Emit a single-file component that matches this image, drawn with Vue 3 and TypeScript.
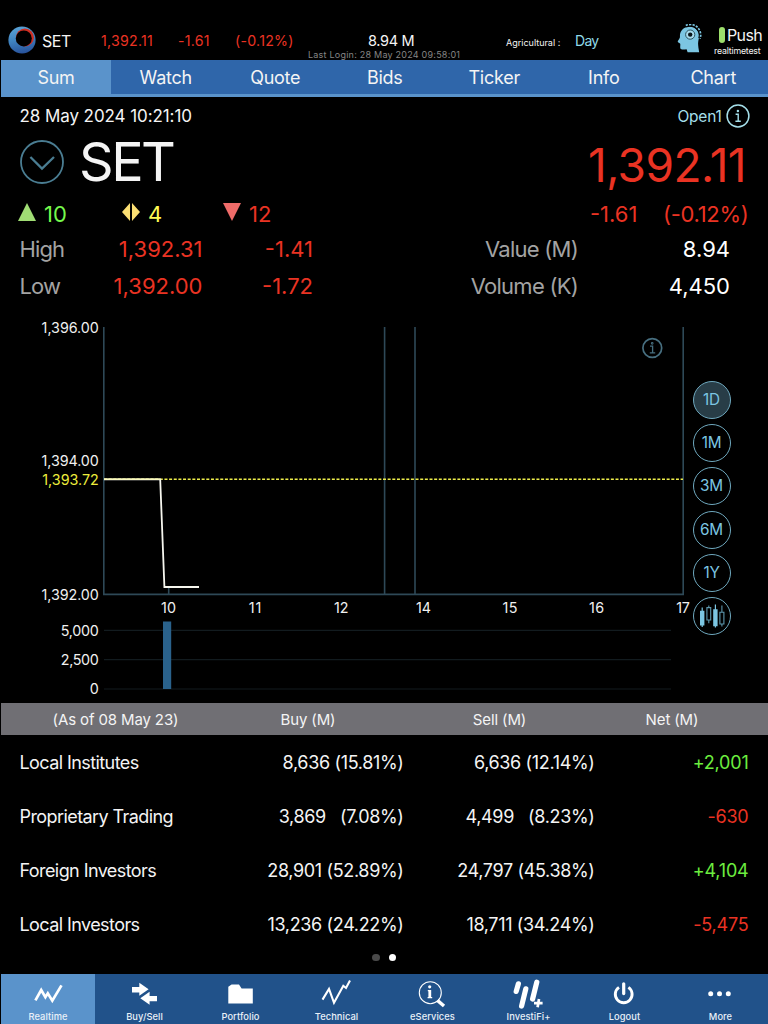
<script setup lang="ts">
interface InvestorRow {
  name: string
  buy: string
  buyPct: string
  sell: string
  sellPct: string
  net: string
}

const navTabs = ['Sum', 'Watch', 'Quote', 'Bids', 'Ticker', 'Info', 'Chart']
const ranges = ['1D', '1M', '3M', '6M', '1Y']

const rows: InvestorRow[] = [
  { name: 'Local Institutes', buy: '8,636', buyPct: '(15.81%)', sell: '6,636', sellPct: '(12.14%)', net: '+2,001' },
  { name: 'Proprietary Trading', buy: '3,869', buyPct: '\u00a0\u00a0(7.08%)', sell: '4,499', sellPct: '\u00a0\u00a0(8.23%)', net: '-630' },
  { name: 'Foreign Investors', buy: '28,901', buyPct: '(52.89%)', sell: '24,797', sellPct: '(45.38%)', net: '+4,104' },
  { name: 'Local Investors', buy: '13,236', buyPct: '(24.22%)', sell: '18,711', sellPct: '(34.24%)', net: '-5,475' },
]

const priceLabels = [
  { text: '1,396.00', y: 22.5, w: 57.2 },
  { text: '1,394.00', y: 156.3, w: 57.2 },
  { text: '1,392.00', y: 290.2, w: 57.2 },
  { text: '5,000', y: 326, w: 38 },
  { text: '2,500', y: 355.2, w: 38 },
]
const hourLabels = [
  { text: '10', x: 168.5, w: 15 },
  { text: '11', x: 255, w: 12.5 },
  { text: '12', x: 341.3, w: 14.5 },
  { text: '14', x: 423.5, w: 15 },
  { text: '15', x: 510, w: 15 },
  { text: '16', x: 596.5, w: 15 },
  { text: '17', x: 683, w: 13.5 },
]
const volumeGrid = [320.3, 349.6, 379]
</script>

<template>
  <div class="screen">
    <header class="top">
      <svg class="logo" viewBox="0 0 28 28">
        <defs>
          <linearGradient id="ringBlue" x1="0.3" y1="0" x2="0.5" y2="1">
            <stop offset="0" stop-color="#5aa3d6" />
            <stop offset="0.5" stop-color="#3f83c0" />
            <stop offset="1" stop-color="#28529b" />
          </linearGradient>
        </defs>
        <circle cx="14" cy="14" r="13.6" fill="url(#ringBlue)" />
        <circle cx="16.9" cy="11.5" r="9" fill="#cf2e22" />
        <circle cx="15.8" cy="12.4" r="8" fill="#000" />
      </svg>
      <span class="t-set">SET</span>
      <span class="t-price red">1,392.11</span>
      <span class="t-chg red">-1.61</span>
      <span class="t-pct red">(-0.12%)</span>
      <div class="t-mid">
        <span class="t-vol">8.94 M</span>
        <span class="t-login">Last Login: 28 May 2024 09:58:01</span>
      </div>
      <span class="t-agri">Agricultural :</span>
      <span class="t-day">Day</span>
      <svg class="head" viewBox="0 0 26 30">
        <path d="M3.2 9.5C4.3 5.3 8 2.8 12.5 2.8C18.6 2.8 22.4 7.3 22 13C21.6 16.5 20.8 18 21.2 21.5C21.4 24.5 22 26.5 22.2 28.3H10.6L9.6 25.2C7 25.4 4 25.8 3.4 24.4C2.9 23.2 3.6 21 3.2 19.8C3 18.9 0.6 18.6 0.7 17.5C0.8 16.6 2.6 14.6 2.9 13.4C3.1 12.2 2.8 10.9 3.2 9.5Z" fill="#7cc6e2" />
        <path d="M8.8 2A10.2 10.2 0 0 1 23 14.4" fill="none" stroke="#000" stroke-width="3.6" />
        <path d="M8.8 1.5A10.4 10.4 0 0 1 23 14.6" fill="none" stroke="#7cc6e2" stroke-width="1.7" stroke-dasharray="2.2 1.2" />
        <circle cx="13.2" cy="10.6" r="4.6" fill="#a8dced" stroke="#24454f" stroke-width="0.9" />
        <circle cx="13.2" cy="10.6" r="2.2" fill="#0a1519" />
      </svg>
      <div class="t-push">
        <div class="push-line"><i class="pill"></i><span>Push</span></div>
        <span class="t-user">realtimetest</span>
      </div>
    </header>

    <nav class="nav">
      <span v-for="(tab, i) in navTabs" :key="tab" class="nav-tab" :class="{ on: i === 0 }">{{ tab }}</span>
    </nav>

    <section class="date-row">
      <span class="date">28 May 2024 10:21:10</span>
      <span class="status">Open1</span>
      <svg class="info" viewBox="0 0 24 24">
        <circle cx="12" cy="12" r="10.9" fill="none" stroke="#a5dfea" stroke-width="1.5" />
        <circle cx="11.9" cy="7" r="1.2" fill="#a5dfea" />
        <path d="M9.6 10.2H12.2V17M9.4 17.2H14.8" fill="none" stroke="#a5dfea" stroke-width="1.4" />
      </svg>
    </section>

    <section class="title-row">
      <svg class="chev" viewBox="0 0 44 44">
        <circle cx="22" cy="22" r="21" fill="none" stroke="#4a7d92" stroke-width="1.8" />
        <path d="M10.4 17L22 28.6L34 17" fill="none" stroke="#4a7d92" stroke-width="2.3" />
      </svg>
      <span class="symbol">SET</span>
      <span class="last red">1,392.11</span>
    </section>

    <section class="counts">
      <svg class="mark" viewBox="0 0 18 18"><path d="M9 0L18 18H0Z" fill="#a0dd74" /></svg>
      <span class="c-up">10</span>
      <svg class="mark" viewBox="0 0 18 18"><path d="M8 0V18L0 9ZM10 0V18L18 9Z" fill="#fbdf73" /></svg>
      <span class="c-flat">4</span>
      <svg class="mark" viewBox="0 0 18 18"><path d="M0 0H18L9 18Z" fill="#ee6b69" /></svg>
      <span class="c-down">12</span>
      <span class="c-chg red">-1.61</span>
      <span class="c-pct red">(-0.12%)</span>
    </section>

    <section class="stats">
      <div class="stat">
        <span class="s-label">High</span>
        <span class="s-price red">1,392.31</span>
        <span class="s-chg red">-1.41</span>
        <span class="s-name">Value (M)</span>
        <span class="s-val">8.94</span>
      </div>
      <div class="stat">
        <span class="s-label">Low</span>
        <span class="s-price red">1,392.00</span>
        <span class="s-chg red">-1.72</span>
        <span class="s-name">Volume (K)</span>
        <span class="s-val">4,450</span>
      </div>
    </section>

    <section class="chart">
      <svg class="plot" viewBox="0 0 692 393" width="692" height="393">
        <g fill="none" stroke="#2e4957" stroke-width="1.6">
          <path d="M103.8 17V284.4H683.2V17" />
          <path d="M384.6 17V284M415 17V284M168.7 278V284" />
        </g>
        <g stroke="#121b1f" stroke-width="1.2">
          <line v-for="y in volumeGrid" :key="y" x1="104" x2="671" :y1="y" :y2="y" />
        </g>
        <rect x="163" y="311.5" width="8.2" height="67.5" fill="#2a628c" />
        <line x1="104" x2="683" y1="169.3" y2="169.3" stroke="#eded4a" stroke-width="1.5" stroke-dasharray="3 1.65" />
        <path d="M104 169.3H160.2L164.4 277H199" fill="none" stroke="#f6f6ee" stroke-width="1.8" />
        <line x1="104" x2="160" y1="169.1" y2="169.1" stroke="#fbfbb0" stroke-width="1.4" />
        <g class="axis" text-anchor="end">
          <text v-for="l in priceLabels" :key="l.text" x="98.8" :y="l.y" :textLength="l.w">{{ l.text }}</text>
          <text x="98.8" y="384.4">0</text>
          <text class="yellow" x="98.8" y="175" textLength="56.5">1,393.72</text>
        </g>
        <g class="axis" text-anchor="middle">
          <text v-for="l in hourLabels" :key="l.text" :x="l.x" y="303.4" :textLength="l.w">{{ l.text }}</text>
        </g>
        <g fill="none" stroke="#476f80" stroke-width="1.7">
          <circle cx="652.3" cy="38" r="9.4" />
          <path d="M650 36.2H652.6V42.5M649.8 42.8H655.2" stroke-width="1.3" />
          <circle cx="652.2" cy="33.3" r="0.5" />
        </g>
      </svg>
      <div class="ranges">
        <span v-for="(r, i) in ranges" :key="r" class="range" :class="{ on: i === 0 }">{{ r }}</span>
        <span class="range">
          <svg viewBox="0 0 38 38" width="38" height="38">
            <g fill="#7cc6e2">
              <path d="M7 13.8H11.4V28.5H7ZM20.2 12.2H24.6V29.2H20.2Z" />
              <path d="M8.6 10.5H9.8V30H8.6ZM21.8 7.5H23V30.6H21.8Z" />
            </g>
            <g fill="none" stroke="#5d98ae" stroke-width="1.1">
              <path d="M13.9 10.6H17.7V23H13.9ZM15.8 8.5V10.5M15.8 23V26.2M26.9 15.3H30.9V27H26.9ZM28.9 8.6V15.3M28.9 27V29.5" />
            </g>
          </svg>
        </span>
      </div>
    </section>

    <section class="table">
      <div class="thead">
        <span>(As of 08 May 23)</span>
        <span>Buy (M)</span>
        <span>Sell (M)</span>
        <span>Net (M)</span>
      </div>
      <div v-for="row in rows" :key="row.name" class="trow">
        <span class="name">{{ row.name }}</span>
        <span class="num">{{ row.buy }} {{ row.buyPct }}</span>
        <span class="num">{{ row.sell }} {{ row.sellPct }}</span>
        <span class="net" :class="row.net.startsWith('+') ? 'green' : 'red'">{{ row.net }}</span>
      </div>
    </section>

    <div class="pager"><i></i><i class="on"></i></div>

    <footer class="bar">
      <div class="item on">
        <svg viewBox="0 0 96 36"><path d="M35.4 26.4L41.2 16L45.4 23.2L47.8 19.4L52.3 26.6L61.5 11.4" fill="none" stroke="#fff" stroke-width="2.7" /></svg>
        <span>Realtime</span>
      </div>
      <div class="item">
        <svg viewBox="0 0 96 36"><path d="M36 13H43.3V8.7L52.6 15.3L43.3 21.8V18.4H36ZM61 21.9H53.6V17.8L44.3 24.3L53.6 30.7V27.2H61Z" fill="#fff" /></svg>
        <span>Buy/Sell</span>
      </div>
      <div class="item">
        <svg viewBox="0 0 96 36"><path d="M36.3 29.6V12.8L39.6 10.4H47L49.6 14.4H60.8V29.6Z" fill="#fff" /></svg>
        <span>Portfolio</span>
      </div>
      <div class="item">
        <svg viewBox="0 0 96 36"><path d="M34.5 25.6L41 15L46 28.8L55.3 11.8L58 14L62 6.6" fill="none" stroke="#fff" stroke-width="2.1" /></svg>
        <span>Technical</span>
      </div>
      <div class="item">
        <svg viewBox="0 0 96 36">
          <circle cx="46.3" cy="18.7" r="11" fill="none" stroke="#fff" stroke-width="1.1" />
          <path d="M53.4 26.4L60 32" stroke="#fff" stroke-width="3.4" />
          <path d="M43.8 16.6H46M43.6 23.6H48.2" fill="none" stroke="#fff" stroke-width="1.2" />
          <path d="M45.8 16V24" stroke="#fff" stroke-width="2.8" />
          <circle cx="45.7" cy="12.8" r="1.6" fill="#fff" />
        </svg>
        <span>eServices</span>
      </div>
      <div class="item">
        <svg viewBox="0 0 96 36">
          <path d="M38.4 9.8L36.2 17.4M45.8 14.8L41.6 32M56.8 8.2L52.6 25" fill="none" stroke="#fff" stroke-width="5.2" stroke-linecap="round" />
          <path d="M54 29.2H62.6M59 25L57.6 33.2" stroke="#fff" stroke-width="2.7" />
        </svg>
        <span>InvestiFi+</span>
      </div>
      <div class="item">
        <svg viewBox="0 0 96 36">
          <path d="M43 13.4A8.4 8.4 0 1 0 52.4 13.4" fill="none" stroke="#fff" stroke-width="2.9" />
          <path d="M47.7 9.8V19.6" stroke="#fff" stroke-width="3.2" stroke-linecap="round" />
        </svg>
        <span>Logout</span>
      </div>
      <div class="item">
        <svg viewBox="0 0 96 36"><g fill="#fff"><circle cx="38.7" cy="19.7" r="2.5" /><circle cx="47.5" cy="19.7" r="2.5" /><circle cx="56.3" cy="19.7" r="2.5" /></g></svg>
        <span>More</span>
      </div>
    </footer>
  </div>
</template>

<style>
html,
body {
  margin: 0;
  background: #000;
}
</style>

<style scoped>
.screen {
  width: 768px;
  height: 1024px;
  overflow: hidden;
  display: flex;
  flex-direction: column;
  background: #000;
  color: #f4f4f4;
  font-family: Inter, "Liberation Sans", sans-serif;
  font-weight: 400;
  white-space: nowrap;
}
.screen span {
  display: block;
}
.screen svg {
  display: block;
  flex: none;
}
.red {
  color: #ea3323;
}
.green {
  color: #6ced3f;
}

.top {
  height: 60px;
  box-sizing: border-box;
  padding: 21px 0 0 8px;
  display: grid;
  grid-template-columns: 34px 59px 78px 56px 73px 198px 69px 102px 37px 54px;
  align-items: start;
  line-height: 40px;
}
.logo {
  width: 28px;
  height: 28px;
  margin-top: 5px;
}
.t-set { font-size: 16px; letter-spacing: -0.5px; }
.t-price, .t-chg, .t-pct { font-size: 14.2px; letter-spacing: 0.25px; }
.t-chg { margin-left: -1px; }
.t-mid {
  display: flex;
  flex-direction: column;
}
.t-vol { font-size: 14.5px; padding-left: 60px; line-height: 40px; height: 27px; letter-spacing: -0.35px; }
.t-login { font-size: 9px; line-height: 14px; color: #858585; letter-spacing: 0.23px; }
.t-agri { font-size: 9px; line-height: 43px; letter-spacing: 0; }
.t-day { font-size: 14px; color: #8fdbe8; letter-spacing: -0.7px; }
.head { width: 26px; height: 30px; margin-top: 3px; }
.push-line {
  display: flex;
  gap: 2px;
  height: 22px;
  line-height: 28px;
  font-size: 16px;
  letter-spacing: -0.6px;
}
.pill {
  width: 6px;
  height: 16px;
  margin-top: 6px;
  border-radius: 3px;
  background: #9ddf6c;
}
.t-push { padding-left: 5px; }
.t-user { font-size: 8.8px; line-height: 16px; margin-left: -5px; letter-spacing: -0.2px; }

.nav {
  height: 37px;
  box-sizing: border-box;
  margin-left: 1px;
  display: grid;
  grid-template-columns: 110px repeat(6, 109.5px);
  background: #2f66aa;
  border-bottom: 3px solid #5a93cb;
}
.nav-tab {
  text-align: center;
  font-size: 18px;
  line-height: 35px;
  letter-spacing: -0.25px;
}
.nav-tab.on { background: #5a93cb; }

.date-row {
  height: 38px;
  display: flex;
  align-items: center;
  padding: 0 18.5px 0 19.5px;
}
.date { font-size: 17px; letter-spacing: -0.08px; flex: 1; }
.status { font-size: 15.5px; color: #a5dfea; margin-right: 4px; letter-spacing: -0.25px; }
.info { width: 24px; height: 24px; }

.title-row {
  height: 60px;
  display: flex;
  align-items: flex-start;
  padding: 0 22px 0 20px;
}
.chev { width: 44px; height: 44px; margin-top: 5px; }
.symbol { font-size: 54px; line-height: 54px; margin-left: 15px; flex: 1; letter-spacing: -2.5px; }
.last { font-size: 46px; line-height: 60px; letter-spacing: -0.55px; }

.counts {
  height: 36px;
  display: grid;
  grid-template-columns: 26px 78px 26px 75px 26px 341px 73px 90px;
  padding-left: 18px;
  font-size: 22px;
  line-height: 38px;
}
.mark { width: 18px; height: 18px; margin-top: 8px; }
.c-up { color: #75f94c; }
.c-flat { color: #fffb54; }
.c-down { color: #ea3323; }
.c-pct { letter-spacing: -0.3px; }

.stats { height: 79px; }
.stat {
  height: 36.5px;
  display: grid;
  grid-template-columns: 92px 91px 110.5px 265px 152px;
  padding-left: 19.5px;
  font-size: 22px;
  line-height: 37px;
}
.s-label, .s-name { color: #a3a3a3; letter-spacing: -0.75px; }
.s-label { letter-spacing: -0.9px; }
.s-price, .s-chg, .s-name, .s-val { text-align: right; }
.s-val { color: #fff; }

.chart { height: 393px; display: flex; }
.axis text {
  font-size: 14.3px;
  fill: #f0f0f0;
}
.axis text.yellow { fill: #eded3c; }
.ranges {
  width: 40px;
  padding-top: 71px;
  display: flex;
  flex-direction: column;
  gap: 5.2px;
}
.range {
  width: 38px;
  height: 38px;
  box-sizing: border-box;
  margin-left: 0.5px;
  border: 1px solid #6fa9bf;
  border-radius: 50%;
  text-align: center;
  line-height: 36px;
  font-size: 15.3px;
  letter-spacing: -0.2px;
  color: #7cc6e2;
}
.range.on { background: #283d47; }
.range svg { margin: -1px; }

.thead {
  height: 32px;
  margin-left: 1px;
  display: grid;
  grid-template-columns: 229px 156px 227px 118px;
  background: #706f74;
  text-align: center;
  font-size: 15px;
  line-height: 33px;
  letter-spacing: -0.13px;
}
.trow {
  height: 54px;
  display: grid;
  grid-template-columns: 200px 184px 191px 154px;
  padding-left: 19.5px;
  font-size: 18px;
  line-height: 55px;
  letter-spacing: -0.35px;
}
.name { letter-spacing: -0.58px; }
.num, .net { text-align: right; }
.net { letter-spacing: -0.2px; }

.pager {
  height: 23px;
  display: flex;
  gap: 9px;
  padding: 2.5px 0 0 372px;
  box-sizing: border-box;
}
.pager i {
  width: 7.5px;
  height: 7.5px;
  border-radius: 50%;
  background: #4a4a4a;
}
.pager i.on { background: #fff; }

.bar {
  height: 50px;
  display: grid;
  grid-template-columns: repeat(8, 96px);
  background: #21528a;
  border-left: 1px solid #000;
  box-sizing: border-box;
}
.item {
  margin-left: -1px;
  text-align: center;
}
.item svg { width: 96px; height: 36px; }
.item.on {
  width: 94px;
  margin-left: 0;
  background: #5a93cb;
}
.item.on svg, .item.on span { margin-left: -1px; width: 96px; }
.item span {
  font-size: 9.3px;
  line-height: 14px;
  letter-spacing: 0.08px;
  font-weight: 500;
  color: #e9f0f8;
}
</style>
